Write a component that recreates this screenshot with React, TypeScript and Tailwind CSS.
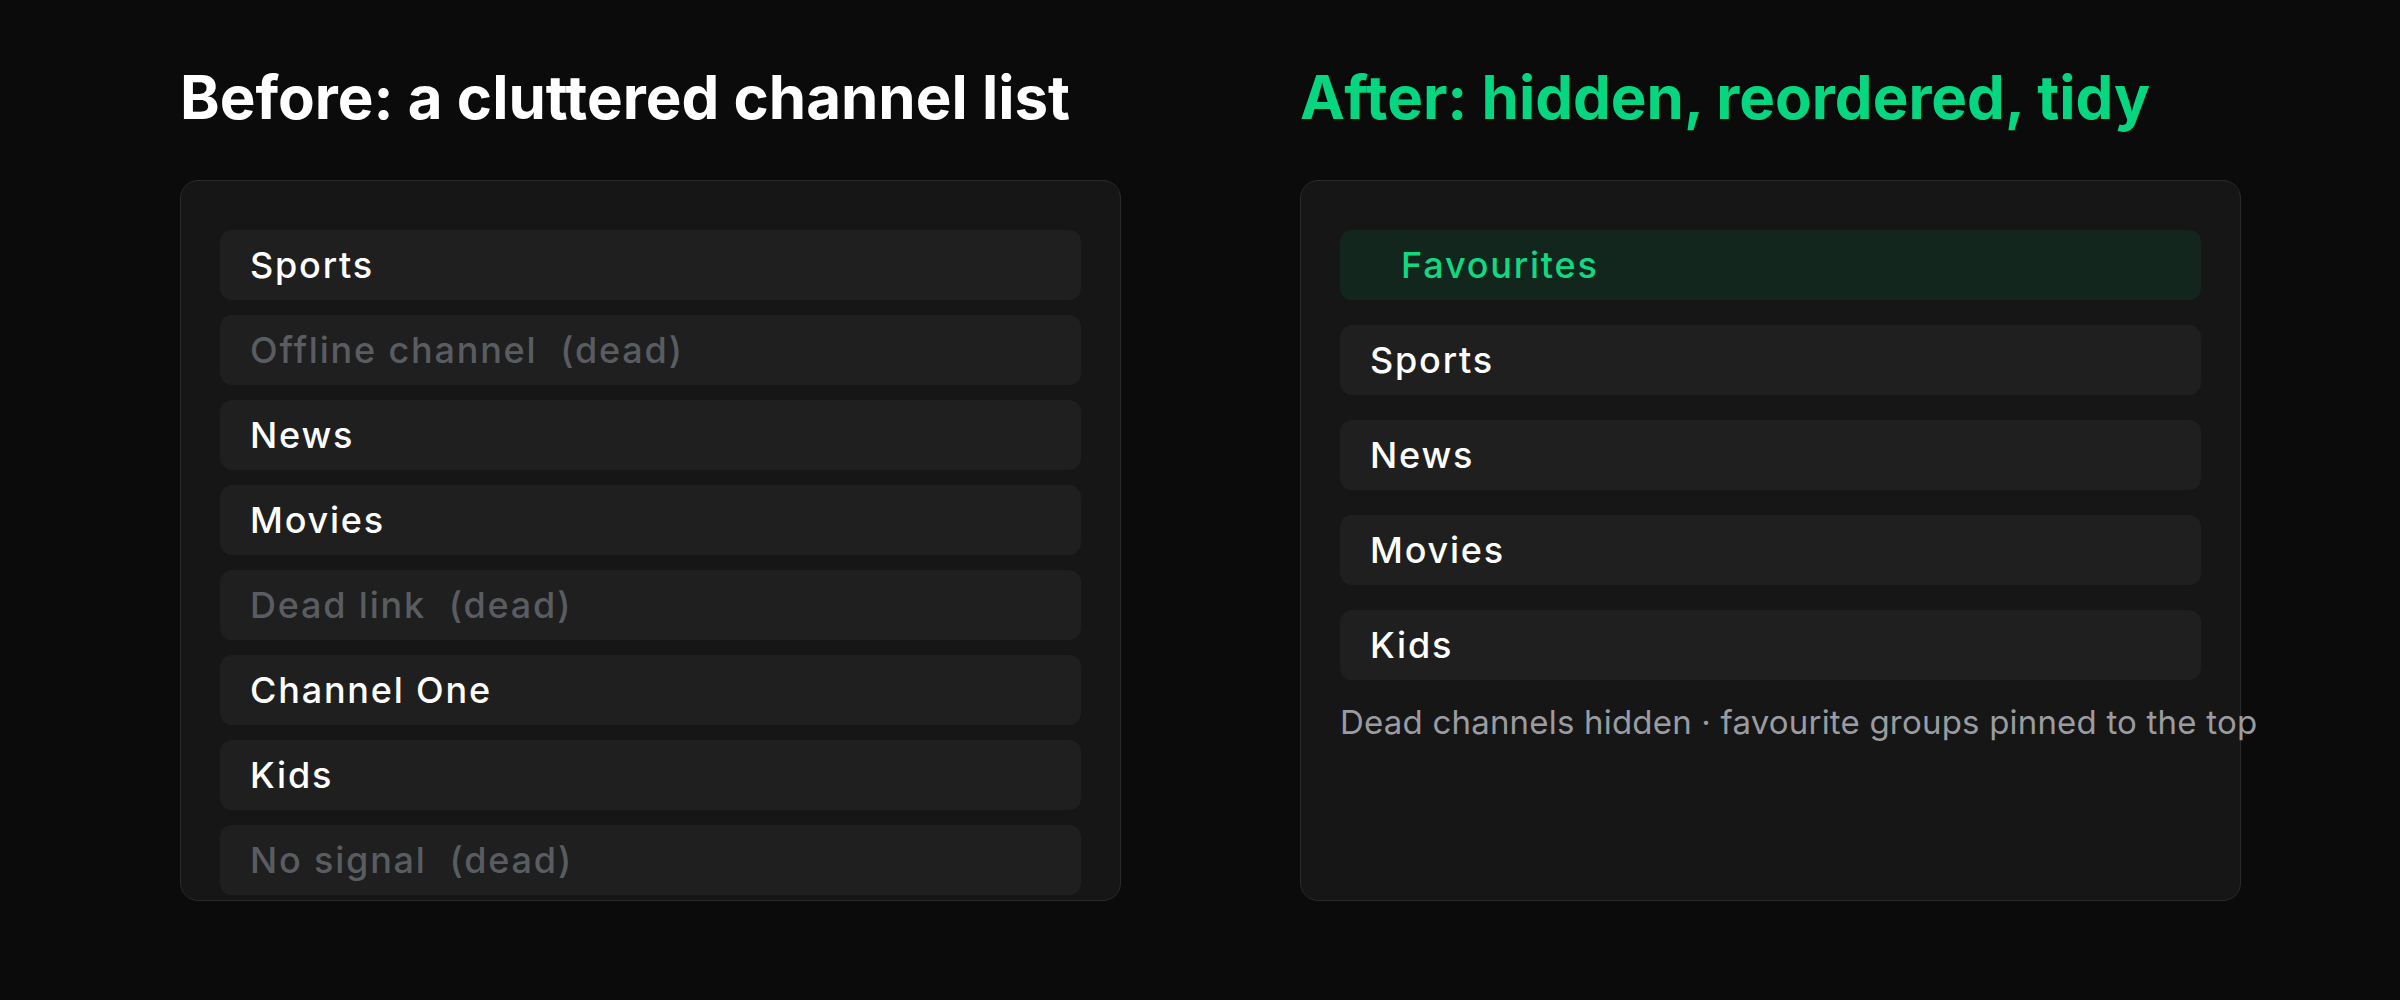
const before = [
  { name: "Sports" },
  { name: "Offline channel  (dead)", dead: true },
  { name: "News" },
  { name: "Movies" },
  { name: "Dead link  (dead)", dead: true },
  { name: "Channel One" },
  { name: "Kids" },
  { name: "No signal  (dead)", dead: true },
];

const after = ["Sports", "News", "Movies", "Kids"];

export default function App() {
  return (
    <div className="min-h-screen w-full bg-[#0b0b0b] font-['Inter','Liberation_Sans',sans-serif] antialiased">
      <div className="flex gap-[179px] pl-[180px] pt-[61px]">
        {/* before */}
        <div className="flex w-[941px] flex-col">
          <h1 className="mb-[47px] whitespace-nowrap text-[60px] font-bold leading-[72px] text-white">
            Before: a cluttered channel list
          </h1>
          <div className="h-[721px] overflow-hidden rounded-[18px] border border-[#2a2a2a] bg-[#161616] px-[39px] pt-[49px]">
            <div className="flex flex-col gap-[15px]">
              {before.map((c) => (
                <div
                  key={c.name}
                  className={`flex h-[70px] items-center whitespace-pre rounded-[12px] bg-[#1f1f1f] px-[30px] text-[36px] font-medium tracking-[1.8px] ${
                    c.dead ? "text-[#595d62]" : "text-white"
                  }`}
                >
                  {c.name}
                </div>
              ))}
            </div>
          </div>
        </div>

        {/* after */}
        <div className="flex w-[941px] flex-col">
          <h1 className="mb-[47px] whitespace-nowrap text-[60px] font-bold leading-[72px] text-[#06d67f]">
            After: hidden, reordered, tidy
          </h1>
          <div className="h-[721px] rounded-[18px] border border-[#2a2a2a] bg-[#161616] px-[39px] pt-[49px]">
            <div className="flex flex-col gap-[25px]">
              <div className="flex h-[70px] items-center rounded-[12px] bg-[#13261e] pl-[61px] pr-[30px] text-[36px] font-medium tracking-[1.8px] text-[#10d982]">
                Favourites
              </div>
              {after.map((name) => (
                <div
                  key={name}
                  className="flex h-[70px] items-center rounded-[12px] bg-[#1f1f1f] px-[30px] text-[36px] font-medium tracking-[1.8px] text-white"
                >
                  {name}
                </div>
              ))}
            </div>
            <p className="mt-[22px] whitespace-nowrap text-[33px] leading-[40px] tracking-[0.2px] text-[#9a9ca1]">
              Dead channels hidden · favourite groups pinned to the top
            </p>
          </div>
        </div>
      </div>
    </div>
  );
}
